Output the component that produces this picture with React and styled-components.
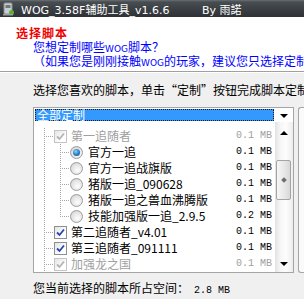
import React from 'react';
import styled, { createGlobalStyle } from 'styled-components';

const cjk = `"Noto Sans CJK SC", "Noto Sans CJK TC", sans-serif`;
const mono = `"Liberation Mono", "DejaVu Sans Mono", monospace`;
const dots = (dir) => `repeating-linear-gradient(${dir}, #a8a8a8 0 1px, transparent 1px 2px)`;

const scripts = [
  { id: 'f1', level: 0, kind: 'check', label: '第一追随者', size: '0.1 MB', checked: true, disabled: true, kids: true },
  { id: 'f1a', level: 1, kind: 'radio', label: '官方一追', size: '0.1 MB', checked: true },
  { id: 'f1b', level: 1, kind: 'radio', label: '官方一追战旗版', size: '0.1 MB' },
  { id: 'f1c', level: 1, kind: 'radio', label: '猪版一追_090628', size: '0.1 MB' },
  { id: 'f1d', level: 1, kind: 'radio', label: '猪版一追之兽血沸腾版', size: '0.1 MB' },
  { id: 'f1e', level: 1, kind: 'radio', label: '技能加强版一追_2.9.5', size: '0.2 MB', last: true },
  { id: 'f2', level: 0, kind: 'check', label: '第二追随者_v4.01', size: '0.1 MB', checked: true },
  { id: 'f3', level: 0, kind: 'check', label: '第三追随者_091111', size: '0.1 MB', checked: true },
  { id: 'dr', level: 0, kind: 'check', label: '加强龙之国', size: '0.1 MB', checked: true, disabled: true },
];

const GlobalStyle = createGlobalStyle`
  html, body { margin: 0; padding: 0; }
  body { width: 304px; height: 299px; overflow: hidden; background: #f0f0f0; }
`;

const Window = styled.div`
  width: 304px;
  height: 299px;
  overflow: hidden;
  display: flex;
  flex-direction: column;
  font-family: ${cjk};
  font-size: 12px;
  background: #f0f0f0;
  color: #000;
`;

const TitleBar = styled.div`
  height: 17px;
  flex: none;
  display: flex;
  align-items: center;
  padding-left: 2px;
  background: linear-gradient(#6a6f73 0, #484d51 2px, #3a3f43 55%, #2e3236 100%);
  color: #fff;
  font-family: "DejaVu Sans", ${cjk};
  font-size: 11px;
  white-space: nowrap;
`;

const TitleText = styled.span`
  width: 181px;
  margin-left: 6px;
  flex: none;
`;

const Header = styled.div`
  height: 55px;
  flex: none;
  box-sizing: border-box;
  padding: 9px 0 0 16px;
  background: #fff;
  border-bottom: 1px solid #a0a0a0;
  box-shadow: 0 1px 0 #fff;
  white-space: nowrap;
`;

const HeaderTitle = styled.div`
  color: #f00000;
  font-weight: bold;
  letter-spacing: 1px;
  line-height: 14px;
`;

const HeaderLine = styled.div`
  color: #0000ff;
  padding-left: 17px;
  line-height: 12px;
  margin-top: ${(p) => (p.$first ? '1px' : '0')};
`;

const Small = styled.span`
  font-family: "DejaVu Sans", sans-serif;
  font-size: 9px;
`;

const FullWidth = styled.span`
  display: inline-block;
  width: 12px;
  text-align: ${(p) => p.$align};
`;

const Content = styled.div`
  padding: 11px 0 0 33px;
  white-space: nowrap;
`;

const Prompt = styled.div`
  line-height: 14px;
`;

const PickerRow = styled.div`
  display: flex;
  margin-top: 10px;
  height: 166px;
`;

const Combo = styled.div`
  width: 261px;
  flex: none;
  box-sizing: border-box;
  border: 1px solid #a5a5a5;
  background: #fff;
  display: flex;
  flex-direction: column;
`;

const ComboHead = styled.div`
  height: 13px;
  flex: none;
  display: flex;
  padding: 1px 0 0 1px;
`;

const Selection = styled.div`
  width: 239px;
  height: 12px;
  box-sizing: border-box;
  border: 1px dotted #1a1a1a;
  background: #3399ff;
  color: #fff;
  line-height: 10px;
  padding-left: 1px;
`;

const ComboButton = styled.div`
  flex: 1;
  display: flex;
  align-items: center;
  justify-content: center;
`;

const Arrow = styled.span`
  width: 0;
  height: 0;
  border-left: 4px solid transparent;
  border-right: 4px solid transparent;
  ${(p) => (p.$up ? 'border-bottom: 4px solid #000;' : 'border-top: 4px solid #000;')}
`;

const ListBody = styled.div`
  flex: 1;
  display: flex;
  min-height: 0;
`;

const Tree = styled.div`
  flex: 1;
  padding-top: 6px;
  overflow: hidden;
`;

const guides = (p) => {
  const imgs = [dots('to bottom'), dots('to right')];
  const pos = ['10px 0', p.$level === 0 ? '10px 8px' : '26px 8px'];
  const size = ['1px 100%', '9px 1px'];
  if (p.$level === 1) {
    imgs.push(dots('to bottom'));
    pos.push('26px 0');
    size.push(p.$last ? '1px 9px' : '1px 100%');
  }
  if (p.$kids) {
    imgs.push(dots('to bottom'));
    pos.push('26px 14px');
    size.push('1px 2px');
  }
  return `
    background-image: ${imgs.join(', ')};
    background-position: ${pos.join(', ')};
    background-size: ${size.join(', ')};
    background-repeat: no-repeat;
  `;
};

const Row = styled.div`
  height: 16px;
  display: flex;
  align-items: center;
  padding-left: ${(p) => (p.$level === 0 ? '20px' : '36px')};
  padding-right: 3px;
  color: ${(p) => (p.$disabled ? '#a0a0a0' : '#000')};
  ${guides}
`;

const CheckBox = styled.span`
  width: 13px;
  height: 13px;
  flex: none;
  box-sizing: border-box;
  border: 1px solid ${(p) => (p.$disabled ? '#c4c4c4' : '#8e8f8f')};
  background: linear-gradient(135deg, #e4e4e4, #fff 70%);
  display: flex;
  align-items: center;
  justify-content: center;
`;

const Radio = styled.span`
  width: 13px;
  height: 13px;
  flex: none;
  box-sizing: border-box;
  border-radius: 50%;
  border: 1px solid #9c9c9c;
  background: radial-gradient(circle at 60% 65%, #fdfdfd 0, #e4e4e4 55%, #c9c9c9 100%);
  display: flex;
  align-items: center;
  justify-content: center;
`;

const RadioDot = styled.span`
  width: 7px;
  height: 7px;
  border-radius: 50%;
  background: radial-gradient(circle at 40% 35%, #8fd2f6 0, #2c86c9 50%, #0d3f78 100%);
`;

const Label = styled.span`
  margin-left: ${(p) => (p.$level === 0 ? '4px' : '5px')};
  line-height: 16px;
`;

const Size = styled.span`
  margin-left: auto;
  font-family: ${mono};
  font-size: 10px;
  line-height: 16px;
`;

const ScrollBar = styled.div`
  width: 18px;
  flex: none;
  display: flex;
  flex-direction: column;
  background: linear-gradient(to right, #e2e2e2 0, #f6f6f6 30%, #fdfdfd 60%, #ededed 100%);
`;

const ScrollButton = styled.div`
  height: ${(p) => p.$h}px;
  flex: none;
  display: flex;
  align-items: center;
  justify-content: center;
`;

const Track = styled.div`
  flex: 1;
`;

const Thumb = styled.div`
  margin: 16px 2px 0 1px;
  height: 40px;
  box-sizing: border-box;
  border: 1px solid #a4a4a4;
  border-radius: 2px;
  background: linear-gradient(to right, #f6f6f6, #e6e6e6 60%, #d8d8d8);
  display: flex;
  align-items: center;
  justify-content: center;
`;

const Grip = styled.span`
  width: 4px;
  height: 4px;
  background: #6d6d6d;
  transform: rotate(45deg);
`;

const SidePanel = styled.div`
  flex: 1;
  margin-left: 4px;
  border: 1px solid #a5a5a5;
  border-right: none;
  border-radius: 3px 0 0 3px;
  background: #fafafa;
`;

const Footer = styled.div`
  margin-top: 8px;
  line-height: 14px;
`;

const FooterSize = styled.span`
  font-family: ${mono};
  font-size: 10px;
  margin-left: 5px;
`;

const Check = ({ disabled }) => (
  <svg width="9" height="9" viewBox="0 0 9 9">
    <path d="M1 4.5 L3.5 7 L8 1.5" fill="none" stroke={disabled ? '#b4b4b4' : '#2546b0'} strokeWidth="1.8" />
  </svg>
);

const AppIcon = () => (
  <svg width="13" height="14" viewBox="0 0 13 14">
    <rect x="2" y="1" width="8" height="11" rx="1" fill="#c9cdd0" stroke="#8a9094" />
    <rect x="3.5" y="3" width="5" height="3" fill="#6e777c" />
    <circle cx="9.5" cy="10.5" r="2.5" fill="#5fae3a" />
    <rect x="1" y="12" width="10" height="1.5" fill="#9aa0a4" />
  </svg>
);

const ScriptRow = ({ item }) => (
  <Row $level={item.level} $last={item.last} $kids={item.kids} $disabled={item.disabled}>
    {item.kind === 'check' ? (
      <CheckBox $disabled={item.disabled}>{item.checked && <Check disabled={item.disabled} />}</CheckBox>
    ) : (
      <Radio>{item.checked && <RadioDot />}</Radio>
    )}
    <Label $level={item.level}>{item.label}</Label>
    <Size>{item.size}</Size>
  </Row>
);

const App = () => (
  <Window>
    <GlobalStyle />
    <TitleBar>
      <AppIcon />
      <TitleText>WOG_3.58F辅助工具_v1.6.6</TitleText>
      <span>By 雨諾</span>
    </TitleBar>
    <Header>
      <HeaderTitle>选择脚本</HeaderTitle>
      <HeaderLine $first>您想定制哪些<Small>WOG</Small>脚本？</HeaderLine>
      <HeaderLine>
        <FullWidth $align="right">（</FullWidth>如果您是刚刚接触<Small>WOG</Small>的玩家，建议您只选择定制官方脚本）
      </HeaderLine>
    </Header>
    <Content>
      <Prompt>
        选择您喜欢的脚本，单击<FullWidth $align="right">“</FullWidth>定制<FullWidth $align="left">”</FullWidth>按钮完成脚本定制
      </Prompt>
      <PickerRow>
        <Combo>
          <ComboHead>
            <Selection>全部定制</Selection>
            <ComboButton><Arrow /></ComboButton>
          </ComboHead>
          <ListBody>
            <Tree>
              {scripts.map((s) => <ScriptRow key={s.id} item={s} />)}
            </Tree>
            <ScrollBar>
              <ScrollButton $h={22}><Arrow $up /></ScrollButton>
              <Track><Thumb><Grip /></Thumb></Track>
              <ScrollButton $h={17}><Arrow /></ScrollButton>
            </ScrollBar>
          </ListBody>
        </Combo>
        <SidePanel />
      </PickerRow>
      <Footer>您当前选择的脚本所占空间：<FooterSize>2.8 MB</FooterSize></Footer>
    </Content>
  </Window>
);

export default App;
